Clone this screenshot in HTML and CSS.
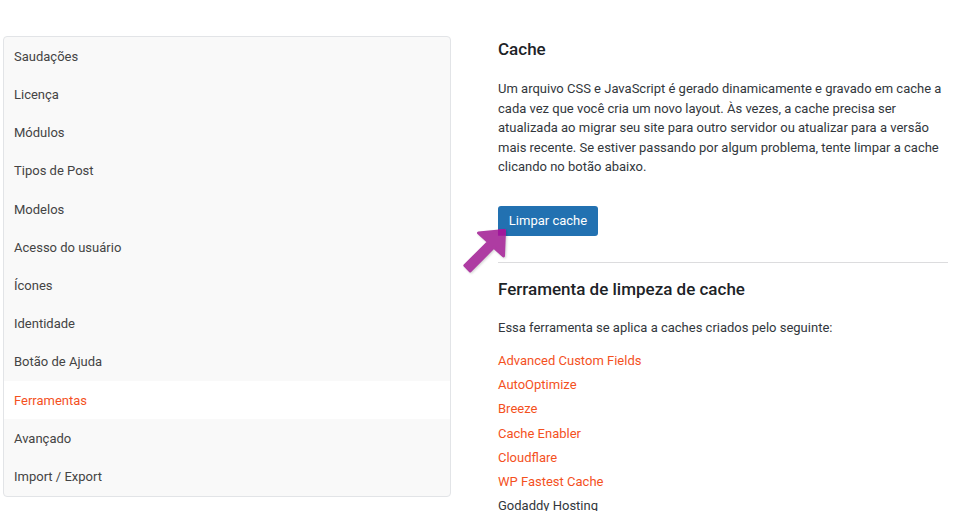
FILE: index.html
```html
<!DOCTYPE html>
<html lang="pt-BR">
<head>
<meta charset="utf-8">
<title>Ferramentas</title>
<link rel="stylesheet" href="styles.css">
</head>
<body>
<div class="page">
  <nav class="side">
    <a class="item">Saudações</a>
    <a class="item">Licença</a>
    <a class="item">Módulos</a>
    <a class="item">Tipos de Post</a>
    <a class="item">Modelos</a>
    <a class="item">Acesso do usuário</a>
    <a class="item">Ícones</a>
    <a class="item">Identidade</a>
    <a class="item">Botão de Ajuda</a>
    <a class="item active">Ferramentas</a>
    <a class="item">Avançado</a>
    <a class="item">Import / Export</a>
  </nav>
  <main class="main">
    <h2 class="title">Cache</h2>
    <p class="text">Um arquivo CSS e JavaScript é gerado dinamicamente e gravado em cache a cada vez que você cria um novo layout. Às vezes, a cache precisa ser atualizada ao migrar seu site para outro servidor ou atualizar para a versão mais recente. Se estiver passando por algum problema, tente limpar a cache clicando no botão abaixo.</p>
    <div class="action">
      <button class="btn" type="button">Limpar cache</button>
      <svg class="arrow" width="52" height="52" viewBox="0 0 52 52" aria-hidden="true">
        <path d="M17.5 5 L43.5 2.5 L42.5 28 L32.75 19.25 L9.15 42.85 L3.85 37.55 L27.45 13.95 Z" fill="#ae3ca2" stroke="#ae3ca2" stroke-width="3" stroke-linejoin="round"/>
        <path d="M37 1.6 L43.5 1 Q45 1 45 2.5 L44.8 7.7 L37 7.7 Z" fill="#a0179b"/>
      </svg>
    </div>
    <hr class="rule">
    <h2 class="title second">Ferramenta de limpeza de cache</h2>
    <p class="text intro">Essa ferramenta se aplica a caches criados pelo seguinte:</p>
    <ul class="list">
      <li><a class="link">Advanced Custom Fields</a></li>
      <li><a class="link">AutoOptimize</a></li>
      <li><a class="link">Breeze</a></li>
      <li><a class="link">Cache Enabler</a></li>
      <li><a class="link">Cloudflare</a></li>
      <li><a class="link">WP Fastest Cache</a></li>
      <li>Godaddy Hosting</li>
    </ul>
  </main>
</div>
</body>
</html>
```
FILE: styles.css
```css
html, body {
  margin: 0;
  padding: 0;
  background: #fff;
  height: 511px;
  overflow: hidden;
}
body {
  font-family: Roboto, "Liberation Sans", sans-serif;
  font-size: 13px;
  color: #32373c;
}
.page {
  display: flex;
  align-items: flex-start;
  gap: 47px;
  padding: 36px 5px 0 3px;
}
.side {
  width: 446px;
  flex: none;
  display: flex;
  flex-direction: column;
  padding-top: 0.3px;
  background: #f9f9f9;
  border: 1px solid #e2e4e7;
  border-radius: 4px;
  overflow: hidden;
}
.item {
  box-sizing: border-box;
  height: 38.21px;
  padding: 0.5px 0 0 10px;
  line-height: 38.21px;
  color: #444;
}
.item.active {
  background: #fff;
  color: #f4511e;
}
.main {
  flex: 1;
  min-width: 0;
}
.title {
  margin: 0;
  font-size: 17px;
  font-weight: 500;
  line-height: 26px;
  color: #1d2327;
}
.text {
  margin: 17px 0 0;
  line-height: 19.5px;
}
.action {
  position: relative;
  margin-top: 29px;
  height: 30px;
}
.btn {
  display: block;
  width: 100px;
  height: 30px;
  padding: 0;
  border: 0;
  border-radius: 3px;
  background: #2271b1;
  color: #fff;
  font: 13px Roboto, "Liberation Sans", sans-serif;
}
.arrow {
  position: absolute;
  left: -37px;
  top: 22px;
  filter: drop-shadow(1px 1px 1px rgba(0, 0, 0, 0.18));
}
.rule {
  margin: 26px 0 0;
  border: 0;
  border-top: 1px solid #dcdcde;
}
.second {
  margin-top: 13px;
}
.intro {
  margin-top: 16.75px;
}
.list {
  list-style: none;
  margin: 13px 0 0;
  padding: 0;
}
.list li {
  height: 24.25px;
  line-height: 19.5px;
}
.link {
  color: #f4511e;
}
```
